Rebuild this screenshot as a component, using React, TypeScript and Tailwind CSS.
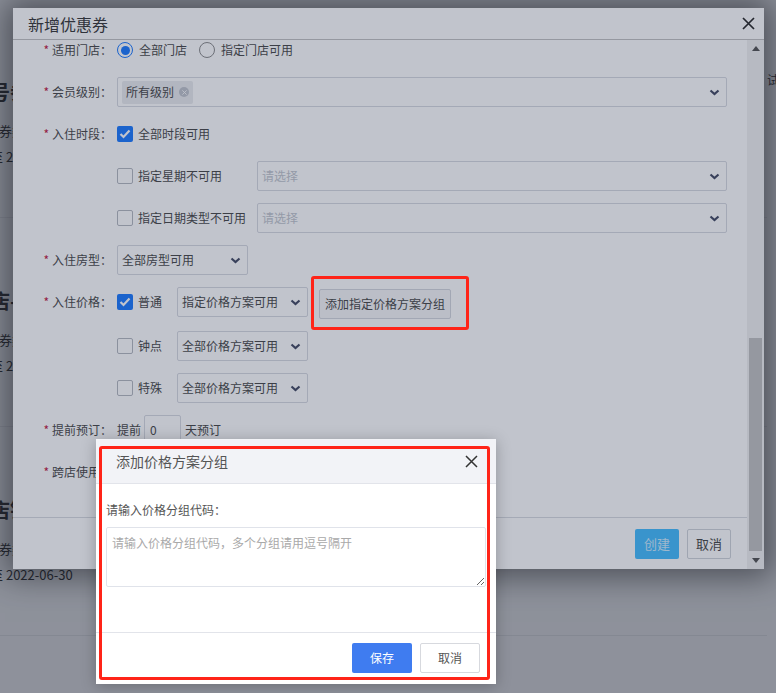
import React from 'react';

const cards = [
  { title: '号券名称', sub: '券类型：折扣券', date: '至 2022-06-30' },
  { title: '店-满减券', sub: '券类型：满减券', date: '至 2022-06-30' },
  { title: '店铺通用券', sub: '券类型：代金券', date: '至 2022-06-30' },
];

const Chevron = () => (
  <svg width="11" height="7" viewBox="0 0 11 7" className="shrink-0">
    <path d="M1.5 1.5l4 3.5 4-3.5" fill="none" stroke="#3f4660" strokeWidth="2.2" />
  </svg>
);

const CloseIcon = ({ size = 13, color = '#222', width = 1.7 }: { size?: number; color?: string; width?: number }) => (
  <svg width={size} height={size} viewBox="0 0 13 13">
    <path d="M1 1l11 11M12 1L1 12" stroke={color} strokeWidth={width} />
  </svg>
);

const Checkbox = ({ checked }: { checked?: boolean }) =>
  checked ? (
    <span className="flex h-[16px] w-[16px] shrink-0 items-center justify-center rounded-[2px] bg-[#1677ff]">
      <svg width="12" height="10" viewBox="0 0 12 10">
        <path d="M1.5 5l3 3 6-6.5" fill="none" stroke="#fff" strokeWidth="2.2" />
      </svg>
    </span>
  ) : (
    <span className="block h-[16px] w-[16px] shrink-0 rounded-[2px] border border-[#b3b7bf] bg-white" />
  );

const Radio = ({ checked }: { checked?: boolean }) =>
  checked ? (
    <span className="flex h-[16px] w-[16px] shrink-0 items-center justify-center rounded-full border-[1.5px] border-[#1677ff] bg-white">
      <span className="h-[9px] w-[9px] rounded-full bg-[#1677ff]" />
    </span>
  ) : (
    <span className="block h-[16px] w-[16px] shrink-0 rounded-full border-[1.5px] border-[#888] bg-white" />
  );

const Select = ({ text, placeholder, className }: { text?: string; placeholder?: string; className: string }) => (
  <div
    className={`flex h-[30px] items-center justify-between rounded-[2px] border border-[#d6d9e0] bg-white pl-[4px] pr-[6px] text-[12px] ${className}`}
  >
    {text ? <span className="text-[#444]">{text}</span> : <span className="text-[#c0c4cc]">{placeholder}</span>}
    <Chevron />
  </div>
);

const Label = ({ text }: { text: string }) => (
  <div className="flex w-[77px] shrink-0 items-center justify-end pr-[5px] text-[12px] text-[#444]">
    <span className="mr-[3px] text-[12px] text-[#c0143c]">*</span>
    <span>{text}</span>
  </div>
);

function BackgroundPage() {
  return (
    <div className="flex">
      <div className="-ml-[10px] flex w-[777px] shrink-0 flex-col pt-[9px]">
        {cards.map((c) => (
          <div key={c.title} className="h-[209px] border-b border-[#e3e5e8] pt-[69px] text-[#333]">
            <div className="text-[20px] font-bold leading-[28px]">{c.title}</div>
            <div className="mt-[15px] pl-[9px] text-[13px] leading-[20px]">{c.sub}</div>
            <div className="mt-[6px] text-[13px] leading-[20px]">{c.date}</div>
          </div>
        ))}
      </div>
      <div className="whitespace-nowrap pt-[71px] text-[12px] text-[#333]">试用券说明</div>
    </div>
  );
}

function CouponModal() {
  return (
    <div className="absolute left-[13px] top-[8px] flex h-[561px] w-[751px] flex-col bg-white shadow-[0_0_30px_8px_rgba(0,0,0,0.5)]">
      <div className="flex h-[32px] shrink-0 items-center justify-between border-b border-[#c2c2c2] pl-[15px] pr-[9px]">
        <span className="text-[16px] text-[#333]">新增优惠券</span>
        <CloseIcon />
      </div>
      <div className="flex min-h-0 flex-1">
        <div className="flex min-w-0 flex-1 flex-col">
          <div className="h-[477px] overflow-hidden pl-[27px] pr-[20px]">
            <div className="flex h-[20px] items-center">
              <Label text="适用门店：" />
              <div className="flex items-center text-[12px] text-[#444]">
                <Radio checked />
                <span className="ml-[6px]">全部门店</span>
                <div className="ml-[12px]">
                  <Radio />
                </div>
                <span className="ml-[6px]">指定门店可用</span>
              </div>
            </div>

            <div className="mt-[17px] flex h-[30px] items-center">
              <Label text="会员级别：" />
              <div className="flex h-[30px] flex-1 items-center justify-between rounded-[2px] border border-[#d6d9e0] bg-white pl-[4px] pr-[6px]">
                <span className="flex h-[23px] items-center gap-[5px] rounded-[2px] bg-[#eaebee] px-[4px] text-[12px] text-[#444]">
                  所有级别
                  <span className="flex h-[10px] w-[10px] items-center justify-center rounded-full bg-[#bfc3cb]">
                    <CloseIcon size={5} color="#fff" width={2.2} />
                  </span>
                </span>
                <Chevron />
              </div>
            </div>

            <div className="mt-[12px] flex h-[30px] items-center">
              <Label text="入住时段：" />
              <Checkbox checked />
              <span className="ml-[5px] text-[12px] text-[#444]">全部时段可用</span>
            </div>

            <div className="mt-[12px] flex h-[30px] items-center pl-[77px]">
              <div className="flex w-[140px] items-center text-[12px] text-[#444]">
                <Checkbox />
                <span className="ml-[5px]">指定星期不可用</span>
              </div>
              <Select placeholder="请选择" className="flex-1" />
            </div>

            <div className="mt-[12px] flex h-[30px] items-center pl-[77px]">
              <div className="flex w-[140px] items-center text-[12px] text-[#444]">
                <Checkbox />
                <span className="ml-[5px]">指定日期类型不可用</span>
              </div>
              <Select placeholder="请选择" className="flex-1" />
            </div>

            <div className="mt-[12px] flex h-[30px] items-center">
              <Label text="入住房型：" />
              <Select text="全部房型可用" className="w-[131px]" />
            </div>

            <div className="mt-[12px] flex h-[32px] items-start">
              <div className="flex h-[30px] items-center">
                <Label text="入住价格：" />
                <div className="flex w-[60px] items-center text-[12px] text-[#444]">
                  <Checkbox checked />
                  <span className="ml-[5px]">普通</span>
                </div>
                <Select text="指定价格方案可用" className="w-[131px]" />
              </div>
              <button className="ml-[11px] mt-[2px] h-[30px] w-[132px] rounded-[2px] border border-[#d3d6de] bg-[#f7f7f8] text-[12px] text-[#444]">
                添加指定价格方案分组
              </button>
            </div>

            {['钟点', '特殊'].map((t) => (
              <div key={t} className="mt-[12px] flex h-[30px] items-center pl-[77px]">
                <div className="flex w-[60px] items-center text-[12px] text-[#444]">
                  <Checkbox />
                  <span className="ml-[5px]">{t}</span>
                </div>
                <Select text="全部价格方案可用" className="w-[131px]" />
              </div>
            ))}

            <div className="mt-[12px] flex h-[30px] items-center text-[12px] text-[#444]">
              <Label text="提前预订：" />
              <span>提前</span>
              <div className="ml-[3px] flex h-[30px] w-[37px] items-center rounded-[2px] border border-[#d6d9e0] bg-white pl-[5px]">
                0
              </div>
              <span className="ml-[4px]">天预订</span>
            </div>

            <div className="mt-[12px] flex h-[30px] items-center text-[12px] text-[#444]">
              <Label text="跨店使用：" />
              <Radio checked />
              <span className="ml-[6px]">不可跨店</span>
            </div>
          </div>

          <div className="flex h-[52px] shrink-0 items-start justify-end gap-[8px] border-t border-[#d8dbe1] pr-[16px] pt-[11px] text-[13px]">
            <button className="h-[30px] w-[44px] rounded-[2px] bg-[#40bcff] text-white/75">创建</button>
            <button className="h-[30px] w-[44px] rounded-[2px] border border-[#cfd3da] bg-white text-[#444]">取消</button>
          </div>
        </div>

        <div className="flex w-[17px] shrink-0 flex-col bg-[#f1f1f1]">
          <div className="flex h-[17px] items-center justify-center">
            <svg width="8" height="5" viewBox="0 0 8 5">
              <path d="M0 5L4 0l4 5z" fill="#505050" />
            </svg>
          </div>
          <div className="mx-[2px] mt-[281px] h-[213px] bg-[#c1c1c1]" />
          <div className="flex-1" />
          <div className="flex h-[17px] items-center justify-center">
            <svg width="8" height="5" viewBox="0 0 8 5">
              <path d="M0 0h8L4 5z" fill="#505050" />
            </svg>
          </div>
        </div>
      </div>
    </div>
  );
}

function GroupDialog() {
  return (
    <div className="absolute left-[96px] top-[439px] w-[400px] bg-white shadow-[0_2px_14px_rgba(0,0,0,0.25)]">
      <div className="flex h-[45px] items-center justify-between border-b border-[#e2e4ea] bg-[#f2f3f7] pl-[20px] pr-[18px]">
        <span className="text-[14px] text-[#555]">添加价格方案分组</span>
        <CloseIcon size={13} color="#333" width={1.5} />
      </div>
      <div className="h-[148px] px-[10px] pt-[17px]">
        <div className="text-[12px] leading-[18px] text-[#555]">请输入价格分组代码：</div>
        <textarea
          className="mt-[8px] block h-[60px] w-full rounded-[2px] border border-[#e0e3ea] px-[5px] py-[6px] text-[12px] leading-[18px] text-[#444] outline-none placeholder:text-[#a9a9a9]"
          placeholder="请输入价格分组代码，多个分组请用逗号隔开"
        />
      </div>
      <div className="flex h-[52px] justify-end gap-[8px] border-t border-[#e2e4ea] pr-[16px] pt-[10px] text-[12px]">
        <button className="h-[30px] w-[60px] rounded-[2px] bg-[#3f7cf0] text-white">保存</button>
        <button className="h-[30px] w-[60px] rounded-[2px] border border-[#d7d9de] bg-white text-[#555]">取消</button>
      </div>
    </div>
  );
}

export default function App() {
  return (
    <div className="relative h-[693px] w-[776px] overflow-hidden bg-[#f5f6f8] font-['Noto_Sans_CJK_SC','Liberation_Sans',sans-serif]">
      <BackgroundPage />
      <div className="absolute inset-0 bg-black/25" />
      <CouponModal />
      <div className="absolute inset-0 bg-[rgba(40,52,80,0.29)]" />
      <GroupDialog />
      {/* annotation boxes drawn over the screenshot */}
      <div className="absolute left-[311px] top-[276px] h-[54px] w-[158px] rounded-[3px] border-[3px] border-[#ff2418]" />
      <div className="absolute left-[99px] top-[446px] h-[234px] w-[391px] rounded-[3px] border-[3px] border-[#ff2418]" />
    </div>
  );
}
